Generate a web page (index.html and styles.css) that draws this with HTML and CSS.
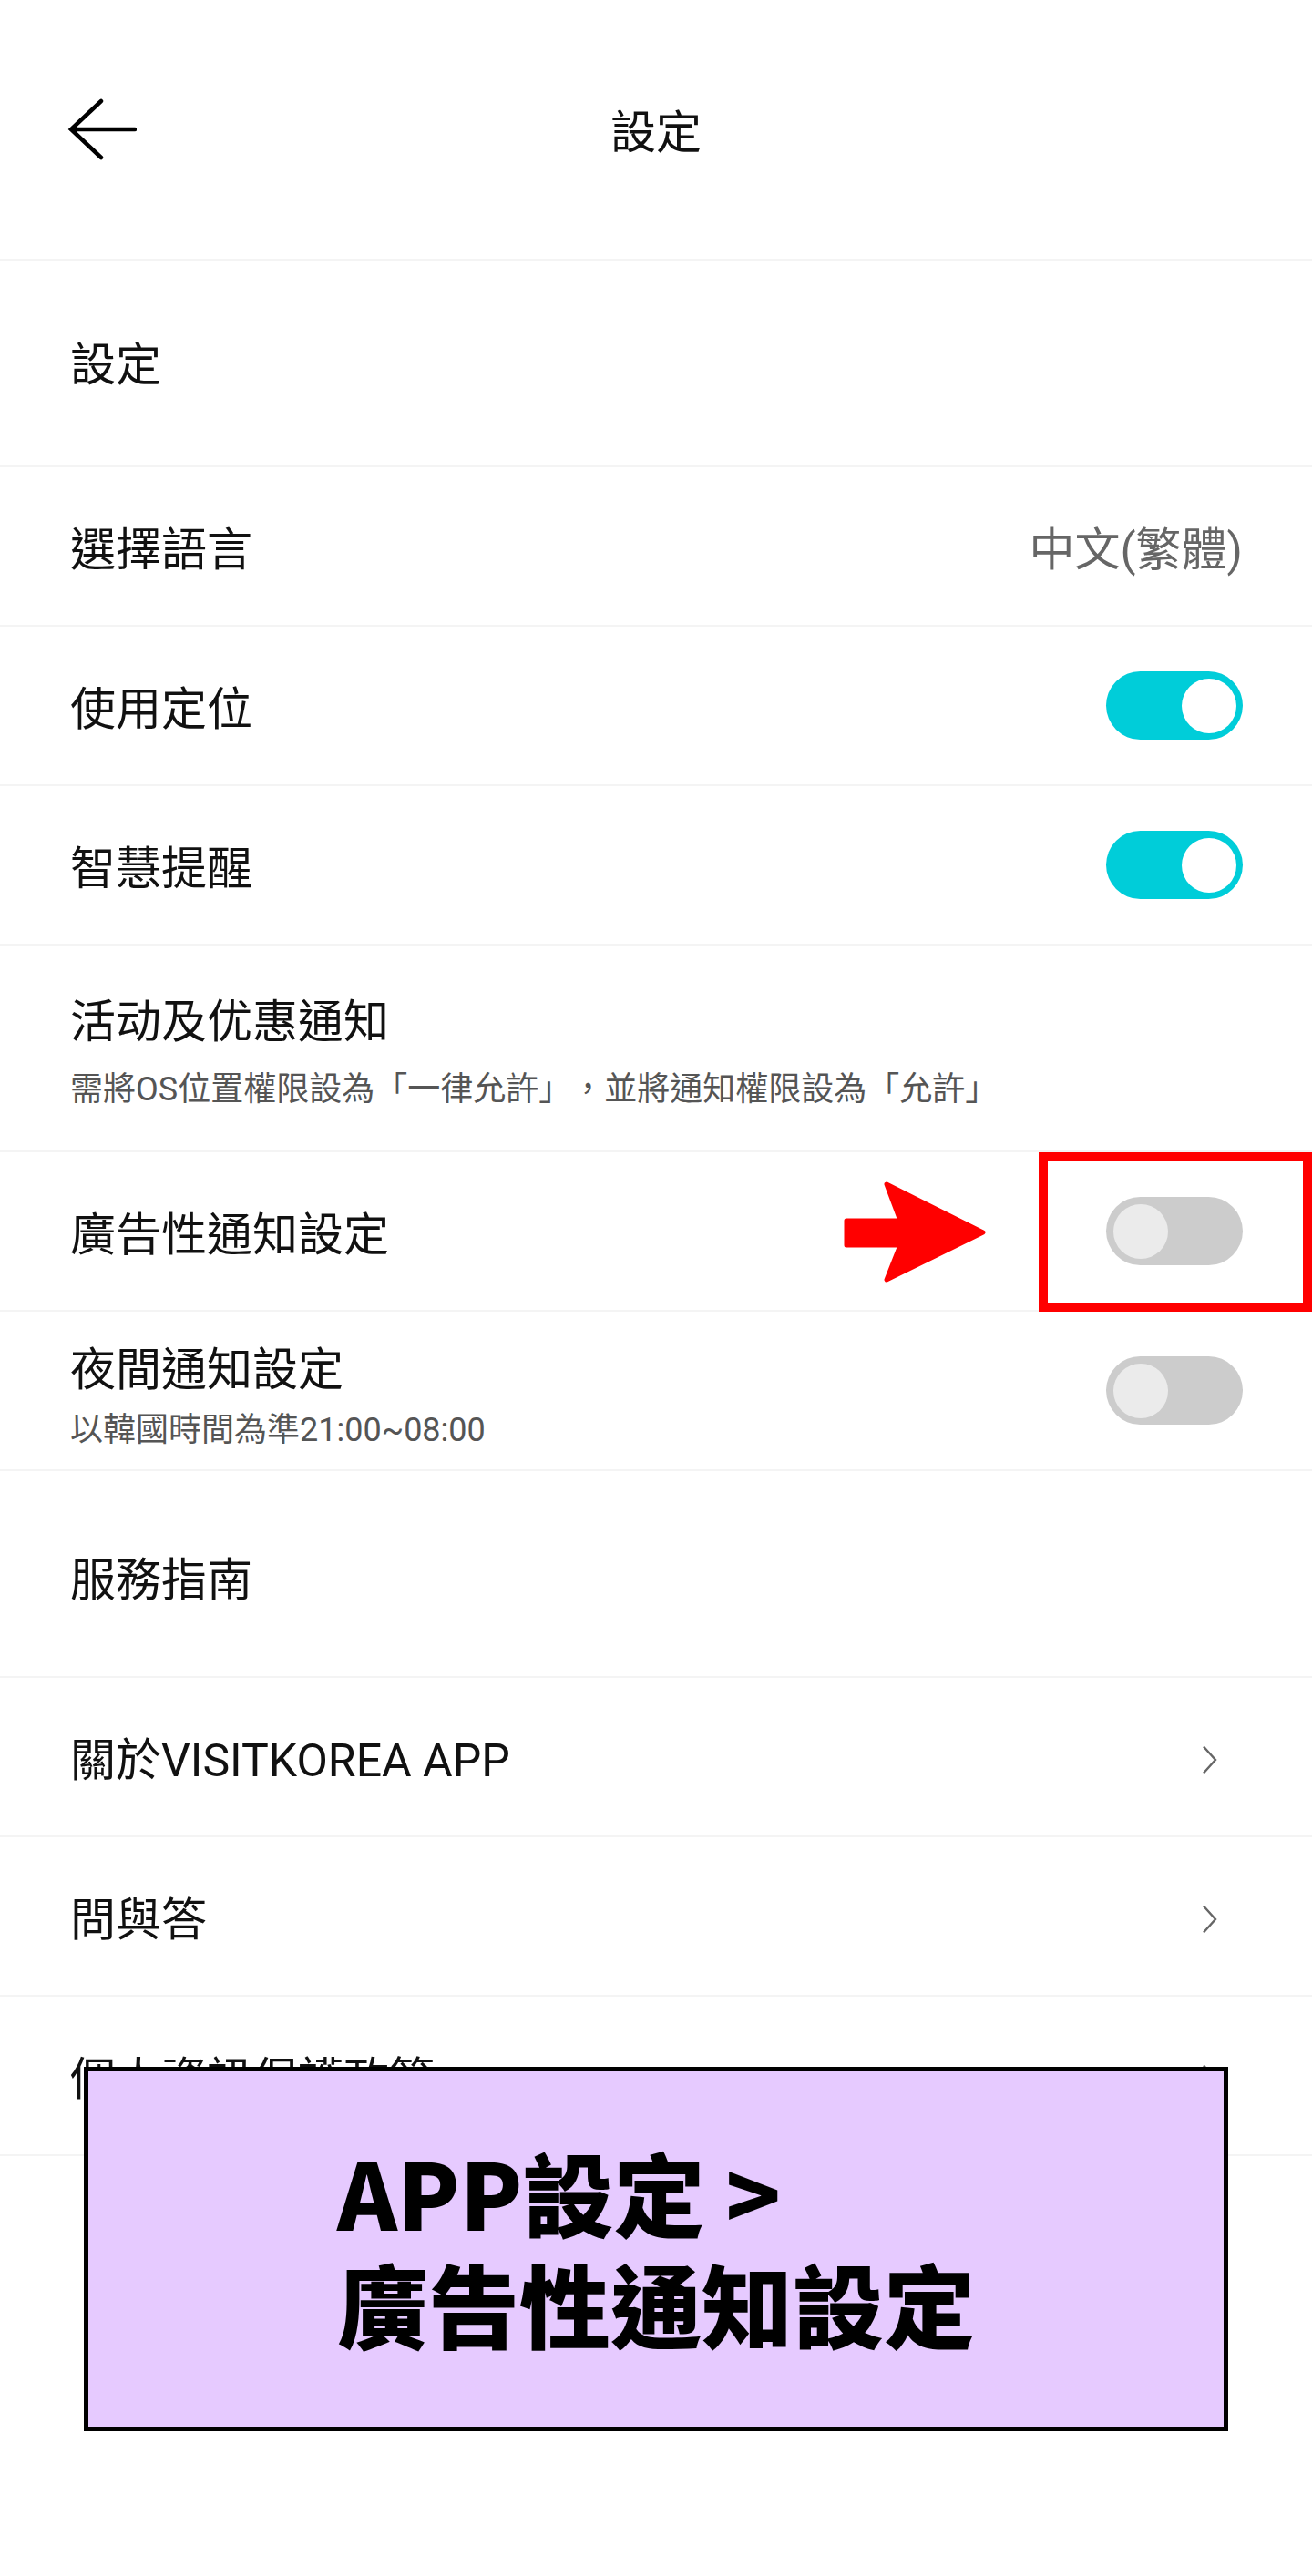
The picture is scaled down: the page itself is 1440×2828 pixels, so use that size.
FILE: index.html
```html
<!DOCTYPE html>
<html lang="zh-Hant">
<head>
<meta charset="utf-8">
<title>設定</title>
<link rel="stylesheet" href="styles.css">
</head>
<body>
<div class="page">
  <header class="topbar">
    <div class="back">
      <svg class="back-icon" width="80" height="70" viewBox="0 0 80 70">
        <path d="M8 35 H78 M41 4 L8 35 L41 66" fill="none" stroke="#000" stroke-width="4.5" stroke-linecap="round" stroke-linejoin="miter"/>
      </svg>
    </div>
    <h1 class="topbar-title">設定</h1>
    <div></div>
  </header>

  <div class="list">
    <div class="row section"><span class="label">設定</span></div>

    <div class="row"><span class="label">選擇語言</span><span class="value">中文(繁體)</span></div>

    <div class="row"><span class="label">使用定位</span><span class="toggle on"><span class="knob"></span></span></div>

    <div class="row"><span class="label">智慧提醒</span><span class="toggle on"><span class="knob"></span></span></div>

    <div class="row tall">
      <div class="stack stack-wide">
        <span class="label">活动及优惠通知</span>
        <span class="sub">需將OS位置權限設為「一律允許」，並將通知權限設為「允許」</span>
      </div>
    </div>

    <div class="row marked">
      <span class="label">廣告性通知設定</span>
      <span class="toggle off"><span class="knob"></span></span>
      <svg class="red-arrow" width="160" height="115" viewBox="0 0 160 115">
        <polygon points="4,45 63,45 48,5 154,58 48,110 63,72 4,72" fill="#ff0000" stroke="#ff0000" stroke-width="5" stroke-linejoin="round"/>
      </svg>
      <span class="red-box"></span>
    </div>

    <div class="row">
      <div class="stack">
        <span class="label">夜間通知設定</span>
        <span class="sub">以韓國時間為準21:00~08:00</span>
      </div>
      <span class="toggle off"><span class="knob"></span></span>
    </div>

    <div class="row section section-low"><span class="label">服務指南</span></div>

    <div class="row"><span class="label">關於VISITKOREA APP</span>
      <svg class="chev" width="44" height="44" viewBox="0 0 44 44"><path d="M1 9.5 L14 24 L1 38.5" fill="none" stroke="#666" stroke-width="2.4"/></svg>
    </div>

    <div class="row"><span class="label">問與答</span>
      <svg class="chev" width="44" height="44" viewBox="0 0 44 44"><path d="M1 9.5 L14 24 L1 38.5" fill="none" stroke="#666" stroke-width="2.4"/></svg>
    </div>

    <div class="row"><span class="label">個人資訊保護政策</span>
      <svg class="chev" width="44" height="44" viewBox="0 0 44 44"><path d="M1 9.5 L14 24 L1 38.5" fill="none" stroke="#666" stroke-width="2.4"/></svg>
    </div>
  </div>

  <div class="callout">
    <div class="callout-text">
      <div>APP設定 &gt;</div>
      <div>廣告性通知設定</div>
    </div>
  </div>
</div>
</body>
</html>
```

FILE: styles.css
```css
* { box-sizing: border-box; }

html, body {
  margin: 0;
  padding: 0;
  background: #ffffff;
}

body {
  font-family: Roboto, "Noto Sans CJK TC", "Noto Sans", sans-serif;
  color: #111111;
  text-spacing-trim: space-all;
}

.page {
  position: relative;
  width: 1440px;
  min-height: 2828px;
  background: #ffffff;
}

.topbar {
  height: 286px;
  border-bottom: 2px solid #f4f4f4;
  display: grid;
  grid-template-columns: 1fr auto 1fr;
  align-items: center;
  padding: 0 70px;
}

.back {
  display: flex;
  align-items: center;
}

.back-icon { display: block; }

.topbar-title {
  margin: 8px 0 0;
  font-size: 50px;
  font-weight: 400;
  line-height: 60px;
  color: #111;
}

.list {
  display: flex;
  flex-direction: column;
}

.row {
  position: relative;
  height: 175px;
  border-bottom: 2px solid #f4f4f4;
  display: flex;
  align-items: center;
  justify-content: space-between;
  padding: 8px 76px 0 77px;
}

.row.section { height: 227px; padding-top: 5px; }
.row.section-low { padding-top: 14px; }
.row.tall { height: 227px; padding-top: 8px; }

.label {
  font-size: 50px;
  line-height: 60px;
  color: #111;
  white-space: nowrap;
}

.value {
  font-size: 50px;
  line-height: 60px;
  color: #666666;
}

.stack {
  display: flex;
  flex-direction: column;
  gap: 14px;
  padding-top: 4px;
}

.stack-wide { gap: 22px; padding-top: 0; }

.sub {
  font-size: 36px;
  line-height: 44px;
  color: #555555;
  white-space: nowrap;
}

.toggle {
  position: relative;
  width: 150px;
  height: 75px;
  border-radius: 38px;
  flex: none;
  margin-top: -8px;
}

.toggle.on { background: #00cdd9; }
.toggle.off { background: #cccccc; }

.knob {
  position: absolute;
  top: 8px;
  width: 60px;
  height: 60px;
  border-radius: 50%;
}

.toggle.on .knob { right: 7px; background: #ffffff; }
.toggle.off .knob { left: 8px; background: #ebebeb; }

.chev {
  display: block;
  flex: none;
  margin-top: -6px;
}

.red-arrow {
  position: absolute;
  left: 925px;
  top: 30px;
}

.red-box {
  position: absolute;
  left: 1140px;
  top: 0;
  width: 300px;
  height: 175px;
  border: 10px solid #ff0000;
}

.callout {
  position: absolute;
  left: 92px;
  top: 2269px;
  width: 1256px;
  height: 400px;
  border: 5px solid #000000;
  background: #e6caff;
  display: flex;
  align-items: center;
  justify-content: center;
}

.callout-text {
  font-family: "Noto Sans CJK TC", sans-serif;
  font-size: 100px;
  font-weight: 900;
  line-height: 122px;
  color: #000000;
  white-space: nowrap;
  padding-bottom: 4px;
}
```
